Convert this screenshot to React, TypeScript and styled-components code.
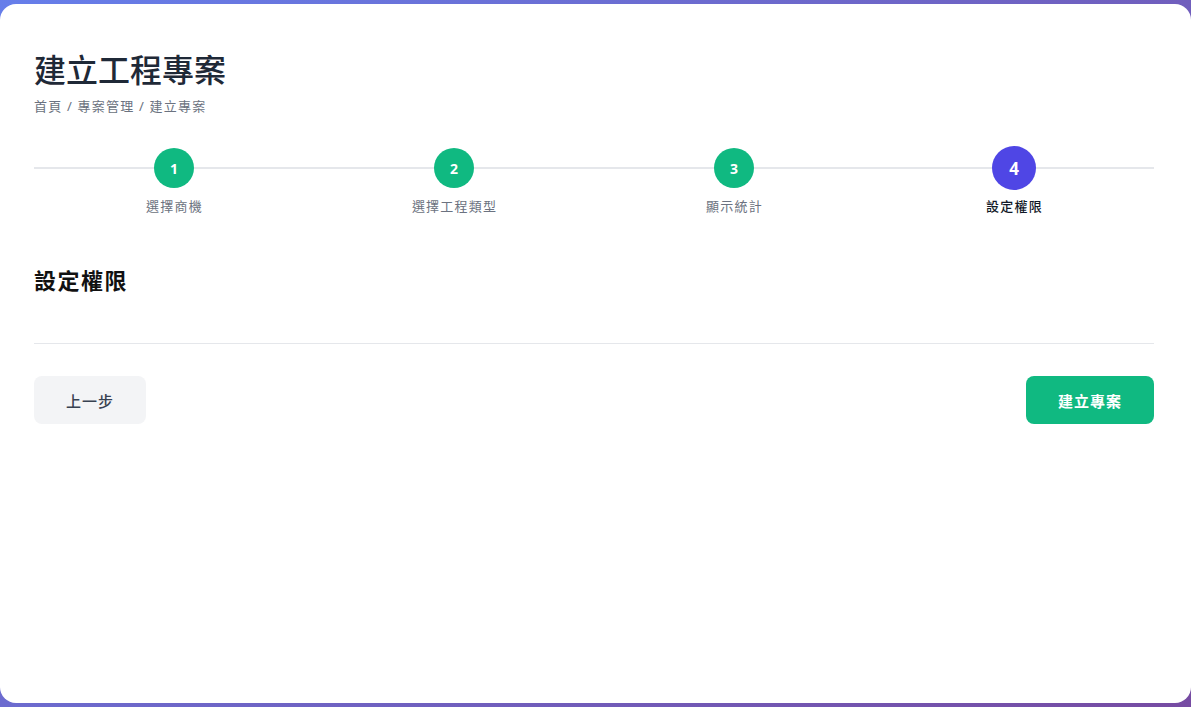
import React from "react";
import styled, { createGlobalStyle } from "styled-components";

const Global = createGlobalStyle`
  html, body { margin: 0; padding: 0; }
  body {
    background: linear-gradient(135deg, #667eea 0%, #764ba2 100%);
    min-height: 707px;
    font-family: "Noto Sans", "Noto Sans CJK TC", sans-serif;
  }
  * { box-sizing: border-box; }
`;

const Page = styled.div`
  padding: 4px 0;
`;

const Card = styled.div`
  background: #ffffff;
  border-radius: 16px;
  height: 699px;
  padding: 44px 37px 0 34px;
`;

const Title = styled.h1`
  margin: 0;
  font-size: 32px;
  font-weight: 500;
  line-height: 44px;
  color: #1f2937;
  letter-spacing: 0;
`;

const Breadcrumb = styled.div`
  margin-top: 5px;
  font-size: 13px;
  line-height: 18px;
  color: #6b7280;
  letter-spacing: 1.2px;
`;

const Stepper = styled.div`
  position: relative;
  margin-top: 33px;
  display: grid;
  grid-template-columns: repeat(4, 1fr);
  &::before {
    content: "";
    position: absolute;
    left: 0;
    right: 0;
    top: 19px;
    height: 2px;
    background: #e5e7eb;
  }
`;

const Step = styled.div`
  position: relative;
  display: flex;
  flex-direction: column;
  align-items: center;
`;

const Circle = styled.div<{ $active?: boolean }>`
  width: ${(p) => (p.$active ? 44 : 40)}px;
  height: ${(p) => (p.$active ? 44 : 40)}px;
  margin-top: ${(p) => (p.$active ? -2 : 0)}px;
  margin-bottom: ${(p) => (p.$active ? -2 : 0)}px;
  border-radius: 50%;
  background: ${(p) => (p.$active ? "#4f46e5" : "#10b981")};
  color: #fff;
  display: flex;
  align-items: center;
  justify-content: center;
  font-family: "Open Sans", "Noto Sans", sans-serif;
  font-weight: 700;
  font-size: ${(p) => (p.$active ? 17 : 14)}px;
`;

const StepLabel = styled.div<{ $active?: boolean }>`
  margin-top: 9px;
  font-size: 13px;
  line-height: 18px;
  color: ${(p) => (p.$active ? "#111827" : "#6b7280")};
  font-weight: ${(p) => (p.$active ? 500 : 400)};
  letter-spacing: 1.2px;
  padding-left: 1px;
`;

const SectionTitle = styled.h2`
  margin: 50px 0 0;
  font-size: 22px;
  line-height: 30px;
  font-weight: 700;
  color: #111;
  letter-spacing: 1.5px;
`;

const Divider = styled.hr`
  margin: 48px 0 0;
  border: 0;
  border-top: 1px solid #e5e7eb;
`;

const Actions = styled.div`
  margin-top: 32px;
  display: flex;
  justify-content: space-between;
`;

const Button = styled.button<{ $primary?: boolean }>`
  height: 48px;
  padding: 0 32px;
  border: 0;
  border-radius: 8px;
  background: ${(p) => (p.$primary ? "#10b981" : "#f3f4f6")};
  color: ${(p) => (p.$primary ? "#ffffff" : "#374151")};
  font-family: "Noto Sans", "Noto Sans CJK TC", sans-serif;
  font-size: 15px;
  letter-spacing: 1px;
  font-weight: ${(p) => (p.$primary ? 700 : 500)};
  cursor: pointer;
`;

const steps = ["選擇商機", "選擇工程類型", "顯示統計", "設定權限"];

export default function App() {
  return (
    <>
      <Global />
      <Page>
        <Card>
          <Title>建立工程專案</Title>
          <Breadcrumb>首頁 / 專案管理 / 建立專案</Breadcrumb>
          <Stepper>
            {steps.map((s, i) => {
              const active = i === 3;
              return (
                <Step key={s}>
                  <Circle $active={active}>{i + 1}</Circle>
                  <StepLabel $active={active}>{s}</StepLabel>
                </Step>
              );
            })}
          </Stepper>
          <SectionTitle>設定權限</SectionTitle>
          <Divider />
          <Actions>
            <Button>上一步</Button>
            <Button $primary>建立專案</Button>
          </Actions>
        </Card>
      </Page>
    </>
  );
}
